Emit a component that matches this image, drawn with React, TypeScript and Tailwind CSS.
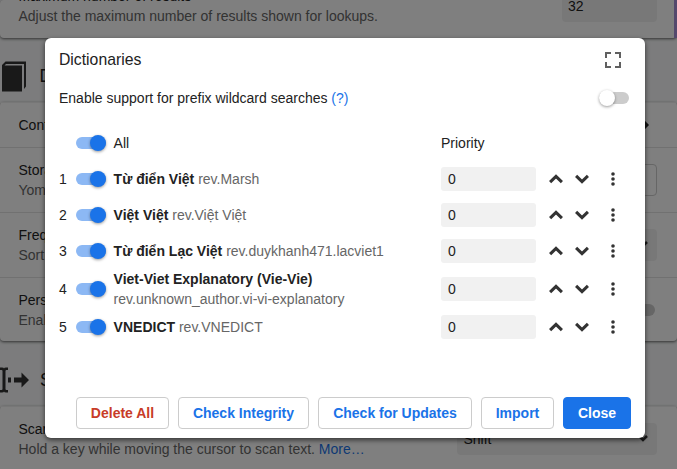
import type { ReactNode } from "react";

type Dictionary = { name: string; rev: string; tall?: boolean };

const dictionaries: Dictionary[] = [
  { name: "Từ điển Việt", rev: "rev.Marsh" },
  { name: "Việt Việt", rev: "rev.Việt Việt" },
  { name: "Từ điển Lạc Việt", rev: "rev.duykhanh471.lacviet1" },
  { name: "Viet-Viet Explanatory (Vie-Vie)", rev: "rev.unknown_author.vi-vi-explanatory", tall: true },
  { name: "VNEDICT", rev: "rev.VNEDICT" },
];

function Toggle({ on = false }: { on?: boolean }) {
  return (
    <span className={`flex h-3 w-[30px] shrink-0 items-center rounded-full ${on ? "justify-end bg-[#8cb8f4]" : "justify-start bg-[#cccccc]"}`}>
      <span
        className={`size-4 shrink-0 rounded-full shadow-[0_1px_3px_rgba(0,0,0,0.4)] ${on ? "bg-[#1a73e8]" : "bg-white"}`}
      />
    </span>
  );
}

function Chevron({ down = false }: { down?: boolean }) {
  return (
    <svg width="16" height="16" viewBox="0 0 16 16" className={down ? "rotate-180" : ""}>
      <path d="M2.100 11.100 8 5.500l5.900 5.600" fill="none" stroke="#333" strokeWidth="3.100" />
    </svg>
  );
}

function Dots() {
  return (
    <svg width="16" height="16" viewBox="0 0 16 16" fill="#333">
      <circle cx="8" cy="3" r="1.8" />
      <circle cx="8" cy="8" r="1.8" />
      <circle cx="8" cy="13" r="1.8" />
    </svg>
  );
}

function DictionaryRow({ index, name, rev, tall }: Dictionary & { index: number }) {
  return (
    <div className={`flex items-center ${tall ? "h-10" : "h-9"}`}>
      <span className="w-[17px]">{index}</span>
      <Toggle on />
      <div className="ml-[7.6px] w-[327.4px]">
        <span className={`font-bold ${tall ? "block" : ""}`}>{name}</span>{" "}
        <span className="text-[#666666]">{rev}</span>
      </div>
      <div className="flex h-6 w-[95px] items-center rounded-[3px] bg-[#f1f1f1] pl-[7px]">0</div>
      <div className="ml-3 flex gap-2.5">
        <Chevron />
        <Chevron down />
      </div>
      <div className="ml-[15px]">
        <Dots />
      </div>
    </div>
  );
}

function Button({ className, children }: { className: string; children: ReactNode }) {
  return (
    <button className={`h-8 shrink-0 whitespace-nowrap rounded-[4px] border font-bold ${className}`}>
      {children}
    </button>
  );
}

function SettingRow({ title, note, children, first }: { title: string; note?: ReactNode; children?: ReactNode; first?: boolean }) {
  return (
    <div className={`flex items-center justify-between border-t py-3 pl-[18.5px] pr-5 ${first ? "border-[#eeeeee]" : "border-[#e3e3e3]"} ${note ? "h-[65px]" : "h-[45px]"}`}>
      <div className="whitespace-nowrap">
        <div>{title}</div>
        {note && <div className="text-[#666666]">{note}</div>}
      </div>
      {children}
    </div>
  );
}

function Arrow() {
  return (
    <svg width="10" height="10" viewBox="0 0 10 10">
      <path d="M1 2l4 4 4-4" fill="none" stroke="#333" strokeWidth="2.500" />
    </svg>
  );
}

const card = "bg-white rounded-[4px] shadow-[0_1px_3px_rgba(0,0,0,0.6)]";

function SettingsPage() {
  return (
    <div className="flex h-[469px] flex-col bg-[#f8f9fa]">
      <div className={`flex h-[38px] shrink-0 items-end justify-between ${card}`}>
        <div className="whitespace-nowrap pb-3 pl-[18.5px]">
          <div>Maximum number of results</div>
          <div className="text-[#666666]">Adjust the maximum number of results shown for lookups.</div>
        </div>
        <div className="flex self-start">
          <div className="-mt-2.5 mr-[17px] flex h-8 w-[95px] items-center rounded-[4px] bg-[#f1f1f1] pl-1.5">32</div>
          <div className="h-[38px] w-[3px] bg-[#a890d8]" />
        </div>
      </div>

      <div className="flex h-16 shrink-0 items-center">
        <svg width="28" height="32" viewBox="0 0 28 32" className="mt-[14px]">
          <path d="M2 4 5.500.5H26v25L24 28V3H6L4.500 4.500H22V30.500H2z" fill="#333" />
        </svg>
        <span className="ml-[11.5px] mt-[11px] text-[17.5px]">Dictionaries</span>
      </div>

      <div className={`h-[239px] shrink-0 ${card}`}>
        <SettingRow title="Configure installed and enabled dictionaries…" first>
          <svg width="8" height="12" viewBox="0 0 8 12" className="mr-2">
            <path d="M1 1l5 5-5 5" fill="none" stroke="#222" strokeWidth="3" />
          </svg>
        </SettingRow>
        <SettingRow title="Storage" note="Yomitan storage">
          <div className="h-8 w-24 rounded-[4px] border border-[#cccccc]" />
        </SettingRow>
        <SettingRow title="Frequency sorting" note="Sort results">
          <div className="flex h-8 w-48 items-center justify-end rounded-[4px] bg-[#f1f1f1] pr-[9px]">
            <Arrow />
          </div>
        </SettingRow>
        <SettingRow title="Persistent storage" note="Enable storage">
          <div className="mr-0.5 h-3 w-7 rounded-full bg-[#cccccc]" />
        </SettingRow>
      </div>

      <div className="flex h-[65px] shrink-0 items-center">
        <svg width="32" height="28" viewBox="0 0 32 28" className="mt-[13px]" fill="#333">
          <path d="M0 1.500h2q2 0 2 1 0-1 2-1h2v2.600H6.500q-1 0-1 1v17.800q0 1 1 1H8v2.600H6q-2 0-2-1 0 1-2 1H0v-2.600h1.500q1 0 1-1V5.100q0-1-1-1H0z" />
          <path d="M8 11.400h3v5H8zM14 11.400h7.500V6.500L29 14l-7.500 7.500v-5H14z" />
        </svg>
        <span className="ml-2 mt-[13px] text-[17.5px]">Scanning</span>
      </div>

      <div className={`h-24 shrink-0 ${card}`}>
        <SettingRow
          title="Scan modifier key"
          note={<>Hold a key while moving the cursor to scan text. <span className="text-[#1a73e8]">More…</span></>}
          first
        >
          <div className="flex h-8 w-[200px] shrink-0 items-center justify-between rounded-[4px] bg-[#f1f1f1] pl-[6.5px] pr-[9px]">
            <span>Shift</span>
            <Arrow />
          </div>
        </SettingRow>
      </div>
    </div>
  );
}

function DictionariesDialog() {
  return (
    <div className="flex h-[400px] w-[600px] flex-col rounded-[6px] bg-white px-3.5 shadow-[0_2px_5px_rgba(0,0,0,0.6)]">
      <div className="flex h-11 items-center justify-between pr-2.5">
        <h2 className="text-[15.75px]">Dictionaries</h2>
        <svg width="16" height="16" viewBox="0 0 16 16" fill="none" stroke="#606060" strokeWidth="2">
          <path d="M1 6V1h5M10 1h5v5M15 10v5h-5M6 15H1v-5" />
        </svg>
      </div>
      <div className="flex h-8 items-center justify-between pr-0.5">
        <span>
          Enable support for prefix wildcard searches <span className="text-[#1a73e8]">(?)</span>
        </span>
        <Toggle />
      </div>
      <div className="mt-[11px] flex h-9 items-center pl-[17px]">
        <Toggle on />
        <span className="ml-[7.6px] w-[327.4px]">All</span>
        <span>Priority</span>
      </div>
      <div>
        {dictionaries.map((d, i) => (
          <DictionaryRow key={d.name} index={i + 1} {...d} />
        ))}
      </div>
      <div className="mb-[9px] mt-auto flex justify-end gap-[9px]">
        <Button className="w-[93px] border-[#cccccc] bg-white text-[#c83c28]">Delete All</Button>
        <Button className="w-[131px] border-[#cccccc] bg-white text-[#1a73e8]">Check Integrity</Button>
        <Button className="w-[154px] border-[#cccccc] bg-white text-[#1a73e8]">Check for Updates</Button>
        <Button className="w-[73px] border-[#cccccc] bg-white text-[#1a73e8]">Import</Button>
        <Button className="w-[68px] border-[#1a73e8] bg-[#1a73e8] text-white">Close</Button>
      </div>
    </div>
  );
}

export default function App() {
  return (
    <div className="relative h-[469px] w-[677px] overflow-hidden font-['Liberation_Sans',Arial,sans-serif] text-[14px] leading-5 text-[#222222]">
      <SettingsPage />
      <div className="absolute inset-0 flex items-start bg-black/50 pl-[45px] pt-[38px]">
        <DictionariesDialog />
      </div>
    </div>
  );
}
